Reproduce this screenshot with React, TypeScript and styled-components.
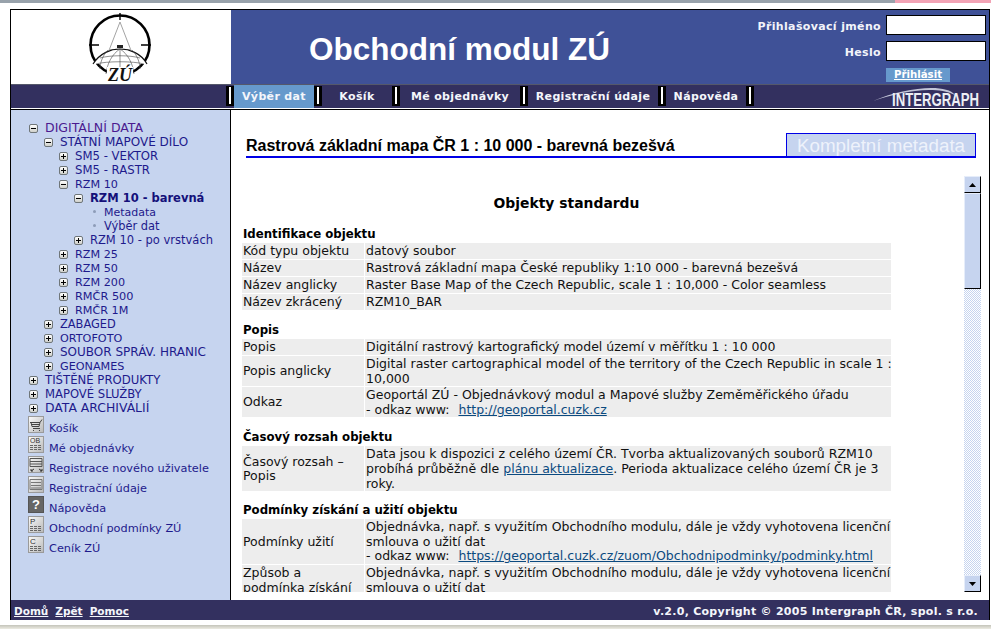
import React from "react";
import styled, { createGlobalStyle } from "styled-components";

const Global = createGlobalStyle`
  html, body { margin: 0; padding: 0; background: #fff; overflow: hidden; }
  #root { width: 991px; height: 629px; overflow: hidden; }
  * { box-sizing: border-box; }
`;

const checker =
  "data:image/svg+xml,%3Csvg xmlns='http://www.w3.org/2000/svg' width='2' height='2' shape-rendering='crispEdges'%3E%3Crect width='2' height='2' fill='%23fff'/%3E%3Crect width='1' height='1' fill='%23c6d4ef'/%3E%3Crect x='1' y='1' width='1' height='1' fill='%23c6d4ef'/%3E%3C/svg%3E";

const Page = styled.div`
  width: 991px;
  height: 629px;
  display: flex;
  flex-direction: column;
  font-family: "DejaVu Sans", Verdana, sans-serif;
  background: #fff;
`;
const TopChrome = styled.div`
  height: 3px;
  flex: none;
  display: flex;
  background: #98a2ab;
  &::after { content: ""; margin-left: auto; width: 96px; background: #f2a3b5; }
`;
const Frame = styled.div`
  flex: none;
  margin: 6px 1px 0 10px;
  width: 980px;
  height: 611px;
  border: 1px solid #000;
  border-bottom: 0;
  display: flex;
  flex-direction: column;
`;
const BottomChrome = styled.div`
  flex: none;
  margin-top: 5px;
  height: 4px;
  background: linear-gradient(#c4c4ba, #ecebe2);
`;
const Header = styled.header`
  flex: none;
  height: 75px;
  display: flex;
  border-bottom: 1px solid #55586a;
`;
const LogoCell = styled.div`
  width: 220px;
  flex: none;
  background: #fff;
  display: flex;
  justify-content: center;
  padding: 2px 2px 0 0;
`;
const Banner = styled.div`
  flex: 1;
  background: #3f5197;
  display: flex;
  justify-content: space-between;
`;
const Title = styled.h1`
  margin: 21px 0 0 78px;
  font: bold 31.5px/36px "Liberation Sans", Arial, sans-serif;
  color: #fff;
  white-space: nowrap;
`;
const Login = styled.form`
  width: 240px;
  padding: 5px 3px 0 0;
  display: flex;
  flex-direction: column;
  align-items: flex-end;
`;
const LoginRow = styled.label`
  display: flex;
  align-items: center;
  gap: 5px;
  height: 20px;
  margin-bottom: 6px;
  font-size: 11px;
  font-weight: bold;
  color: #f2f4fa;
  letter-spacing: 0.35px;
`;
const LoginText = styled.span`
  margin-top: 2px;
`;
const LoginInput = styled.input`
  width: 100px;
  height: 20px;
  border: 1px solid #000;
  background: #fff;
  padding: 0;
`;
const LoginButton = styled.a`
  align-self: flex-start;
  margin: 1px 0 0 137px;
  width: 64px;
  height: 14px;
  background: #6699cc;
  color: #fff;
  font-size: 10.2px;
  font-weight: bold;
  line-height: 13px;
  text-align: center;
  text-decoration: underline;
`;
const Nav = styled.nav`
  flex: none;
  height: 23px;
  background: #33305f;
  display: flex;
  padding-left: 215px;
  position: relative;
`;
const Sep = styled.span`
  flex: none;
  width: 8px;
  height: 20px;
  margin-top: 1px;
  background: #000;
  display: flex;
  justify-content: center;
  &::before { content: ""; width: 2px; height: 17px; margin-top: 1px; background: #fff; }
`;
const Tab = styled.a<{ $w: number; $active?: boolean }>`
  flex: none;
  width: ${(p) => p.$w}px;
  background: ${(p) => (p.$active ? "#6699cc" : "transparent")};
  color: #f4f6fb;
  font-size: 11px;
  font-weight: bold;
  line-height: 24px;
  letter-spacing: 0.35px;
  text-align: center;
  white-space: nowrap;
`;
const Intergraph = styled.svg`
  position: absolute;
  right: 8px;
  top: 0;
`;
const Rule = styled.div`
  flex: none;
  height: 2px;
  background: linear-gradient(#fff 50%, #000 50%);
`;
const Body = styled.div`
  flex: none;
  height: 490px;
  display: flex;
`;
const Side = styled.aside`
  width: 220px;
  flex: none;
  background: #c6d4ef;
  border-right: 1px solid #000;
  padding-top: 12px;
`;
const TreeRow = styled.div<{ $level: number }>`
  height: 14px;
  display: flex;
  align-items: center;
  padding-left: ${(p) => 18 + p.$level * 15}px;
  line-height: 14px;
  white-space: nowrap;
`;
const Toggle = styled.span<{ $open: boolean }>`
  flex: none;
  width: 9px;
  height: 9px;
  margin: -1px 7px 0 0;
  border: 1px solid #6f7679;
  border-radius: 2px;
  background: linear-gradient(#fff, #cfd0ca);
  position: relative;
  &::before {
    content: "";
    position: absolute;
    left: 1px;
    top: 3px;
    width: 5px;
    height: 1px;
    background: #000;
  }
  &::after {
    content: "";
    display: ${(p) => (p.$open ? "none" : "block")};
    position: absolute;
    left: 3px;
    top: 1px;
    width: 1px;
    height: 5px;
    background: #000;
  }
`;
const Bullet = styled.span`
  flex: none;
  width: 3px;
  height: 3px;
  margin: -4px 8px 0 4px;
  border-radius: 50%;
  background: #8d9cb8;
`;
const TreeLabel = styled.a<{ $size: number; $bold?: boolean; $visited?: boolean }>`
  font-size: ${(p) => p.$size}px;
  margin-top: ${(p) => (p.$size >= 11.4 ? -2 : 0)}px;
  color: ${(p) => (p.$visited ? "#4b1a8f" : p.$bold ? "#14107a" : "#1e1a8c")};
  font-weight: ${(p) => (p.$bold ? "bold" : "normal")};
`;
const MenuList = styled.div`
  padding-left: 17px;
`;
const MenuRow = styled.div`
  height: 20px;
  display: flex;
  align-items: flex-start;
  font-size: 11.3px;
  color: #1e1a8c;
  white-space: nowrap;
`;
const MenuIcon = styled.svg`
  flex: none;
  margin-right: 4px;
`;
const MenuText = styled.a`
  line-height: 14px;
  margin-top: 6px;
`;
const Main = styled.main`
  flex: 1;
  min-width: 0;
  display: flex;
  flex-direction: column;
`;
const TitleBar = styled.div`
  margin: 23px 13px 0 15px;
  height: 25px;
  flex: none;
  display: flex;
  justify-content: space-between;
  border-bottom: 2px solid #0000e6;
`;
const PageTitle = styled.h2`
  margin: 0;
  padding-top: 4px;
  font: bold 16px/18px "Liberation Sans", Arial, sans-serif;
  color: #000;
  white-space: nowrap;
`;
const MetaButton = styled.a`
  width: 190px;
  flex: none;
  background: #c6d4ef;
  border: 1px solid #0000e6;
  border-bottom: 0;
  color: #eef2fb;
  font: 18.8px/23px "Liberation Sans", Arial, sans-serif;
  text-align: center;
  white-space: nowrap;
`;
const ScrollRow = styled.div`
  margin-top: 18px;
  height: 416px;
  flex: none;
  display: flex;
  padding-right: 8px;
`;
const Content = styled.div`
  flex: 1;
  min-width: 0;
  overflow: hidden;
  padding: 19px 0 0 11px;
`;
const ContentInner = styled.div`
  width: 649px;
`;
const Heading = styled.h3`
  margin: 0 0 15px;
  text-align: center;
  font-size: 13.9px;
  line-height: 17px;
  font-weight: bold;
  color: #000;
`;
const SectionTitle = styled.h4`
  margin: 0;
  padding-left: 1px;
  font-size: 11.75px;
  line-height: 15px;
  font-weight: bold;
  color: #000;
`;
const Table = styled.table<{ $after: number }>`
  border-collapse: separate;
  border-spacing: 1px;
  margin: 0 -1px ${(p) => p.$after}px;
  width: 651px;
  table-layout: fixed;
  font-size: 12.5px;
  line-height: 14.6px;
  color: #111;
`;
const Cell = styled.td`
  height: 16px;
  background: #ededed;
  padding: 1px 0 0 1px;
  vertical-align: middle;
  overflow-wrap: break-word;
`;
const LabelCol = styled.col`
  width: 122px;
`;
const Link = styled.a`
  color: #0b4a80;
  text-decoration: underline;
`;
const UrlLink = styled(Link)`
  margin-left: 5px;
`;
const FullLine = styled.span`
  white-space: nowrap;
`;
const Scrollbar = styled.div`
  width: 17px;
  flex: none;
  height: 416px;
  display: flex;
  flex-direction: column;
  background: url("${checker}") 0 0 / 2px 2px;
`;
const ScrollBtn = styled.div`
  flex: none;
  height: 17px;
  background: #c6d4ef;
  border: 1px solid;
  border-color: #e6edfa #000 #000 #e6edfa;
  display: flex;
  align-items: center;
  justify-content: center;
`;
const ScrollThumb = styled.div`
  flex: none;
  height: 96px;
  background: #c6d4ef;
  border: 1px solid;
  border-color: #e6edfa #000 #000 #e6edfa;
`;
const ScrollSpace = styled.div`
  flex: 1;
`;
const Footer = styled.footer`
  flex: none;
  height: 20px;
  background: #33305f;
  color: #f4f6fb;
  font-size: 10.5px;
  font-weight: bold;
  line-height: 23px;
  display: flex;
  justify-content: space-between;
  padding: 0 11px 0 3px;
`;
const FootLinks = styled.div`
  display: flex;
  gap: 7px;
`;
const FootLink = styled.a`
  text-decoration: underline;
`;
const FootNote = styled.div`
  font-size: 11px;
  letter-spacing: 0.27px;
`;

const Logo = () => (
  <svg width="68" height="72" viewBox="0 0 68 72" aria-label="ZÚ">
    <circle cx="34" cy="33" r="29.5" fill="none" stroke="#000" strokeWidth="2.6" />
    <path d="M34 1v7M3 33h10M55 33h10" stroke="#000" strokeWidth="1.4" />
    <path d="M34 10 22 41M34 10 46 41" stroke="#999" strokeWidth="0.9" fill="none" />
    <path d="M31 33h6v3h-6z" fill="#222" />
    <path d="M24 38h20" stroke="#555" strokeWidth="1" />
    <path d="M7 52c7-11 18-15 27-15s21 4 27 15" fill="#fff" stroke="#111" strokeWidth="1.2" />
    <path d="M10 52c10-3 38-3 48 0M14 46c10-3 30-3 40 0M34 37v26M34 37c-8 5-13 15-14 25M34 37c8 5 13 15 14 25M22 38c-6 6-8 14-8 19M46 38c6 6 8 14 8 19" stroke="#444" strokeWidth="0.6" fill="none" />
    <rect x="21" y="55" width="26" height="15" fill="#fff" />
    <text x="34" y="69" textAnchor="middle" fontFamily="Liberation Serif, serif" fontWeight="bold" fontStyle="italic" fontSize="18" fill="#111">ZÚ</text>
  </svg>
);

type IconKind = "cart" | "ob" | "reg" | "data" | "help" | "p" | "c";

const Icon = ({ kind }: { kind: IconKind }) => {
  const dark = kind === "help";
  return (
    <MenuIcon width="17" height="18" viewBox="0 0 17 18">
      <defs>
        <linearGradient id={`g-${kind}`} x1="0" y1="0" x2="1" y2="1">
          <stop offset="0" stopColor="#fafafa" />
          <stop offset="1" stopColor="#b9b9b9" />
        </linearGradient>
      </defs>
      <rect x="0.5" y="0.5" width="15" height="16" fill={dark ? "#666" : `url(#g-${kind})`} stroke={dark ? "#555" : "#9a9a9a"} />
      {kind === "cart" && (
        <g fill="none" stroke="#444" strokeWidth="1">
          <path d="M2 6.500h10l2-3M3 6.500l1 4h7l1-4M4 8.500h7M5 12.500h7" />
          <path d="M5 14.500h1M11 14.500h1" />
        </g>
      )}
      {kind === "ob" && (
        <g>
          <text x="2" y="7" fontFamily="Liberation Sans, sans-serif" fontSize="7" fill="#333">OB</text>
          <path d="M2 9.500h12M2 11.500h12M2 13.500h12" stroke="#666" strokeDasharray="3 1" />
        </g>
      )}
      {kind === "reg" && (
        <g stroke="#555" fill="none">
          <path d="M2 2.500h12v8H2zM2 5.500h12M2 8h12" />
          <path d="M3 15l3-2M3 13v2h2M14 15l-3-2M14 13v2h-2" stroke="#333" />
        </g>
      )}
      {kind === "data" && (
        <path d="M2 3.500h12v10H2zM3 6.500h10M3 9.500h10M3 12h10" stroke="#777" fill="none" />
      )}
      {kind === "help" && (
        <text x="8" y="13" textAnchor="middle" fontFamily="Liberation Sans, sans-serif" fontWeight="bold" fontSize="13" fill="#fff">?</text>
      )}
      {(kind === "p" || kind === "c") && (
        <g>
          <text x="2" y="7.500" fontFamily="Liberation Sans, sans-serif" fontSize="8" fill="#333">{kind.toUpperCase()}</text>
          <path d="M2 10.500h12M2 12.500h12M2 14.500h12" stroke="#666" strokeDasharray="3 1" />
        </g>
      )}
    </MenuIcon>
  );
};

type Node = { t: string; l: number; s: "o" | "c" | "b"; z: number; bold?: boolean; visited?: boolean };
const tree: Node[] = [
  { t: "DIGITÁLNÍ DATA", l: 0, s: "o", z: 12.5, visited: true },
  { t: "STÁTNÍ MAPOVÉ DÍLO", l: 1, s: "o", z: 12 },
  { t: "SM5 - VEKTOR", l: 2, s: "c", z: 11.7 },
  { t: "SM5 - RASTR", l: 2, s: "c", z: 11.7 },
  { t: "RZM 10", l: 2, s: "o", z: 11.2 },
  { t: "RZM 10 - barevná", l: 3, s: "o", z: 11.5, bold: true },
  { t: "Metadata", l: 4, s: "b", z: 11 },
  { t: "Výběr dat", l: 4, s: "b", z: 11.4 },
  { t: "RZM 10 - po vrstvách", l: 3, s: "c", z: 11.5 },
  { t: "RZM 25", l: 2, s: "c", z: 11.2 },
  { t: "RZM 50", l: 2, s: "c", z: 11.2 },
  { t: "RZM 200", l: 2, s: "c", z: 11.2 },
  { t: "RMČR 500", l: 2, s: "c", z: 11.3 },
  { t: "RMČR 1M", l: 2, s: "c", z: 11.2 },
  { t: "ZABAGED", l: 1, s: "c", z: 11.4 },
  { t: "ORTOFOTO", l: 1, s: "c", z: 11.2 },
  { t: "SOUBOR SPRÁV. HRANIC", l: 1, s: "c", z: 12 },
  { t: "GEONAMES", l: 1, s: "c", z: 11.2 },
  { t: "TIŠTĚNÉ PRODUKTY", l: 0, s: "c", z: 11.7 },
  { t: "MAPOVÉ SLUŽBY", l: 0, s: "c", z: 11.6 },
  { t: "DATA ARCHIVÁLIÍ", l: 0, s: "c", z: 12.4 },
];

const menu: { t: string; k: IconKind }[] = [
  { t: "Košík", k: "cart" },
  { t: "Mé objednávky", k: "ob" },
  { t: "Registrace nového uživatele", k: "reg" },
  { t: "Registrační údaje", k: "data" },
  { t: "Nápověda", k: "help" },
  { t: "Obchodní podmínky ZÚ", k: "p" },
  { t: "Ceník ZÚ", k: "c" },
];

type Row = [string, React.ReactNode];
const sections: { title: string; after: number; rows: Row[] }[] = [
  {
    title: "Identifikace objektu",
    after: 12,
    rows: [
      ["Kód typu objektu", "datový soubor"],
      ["Název", "Rastrová základní mapa České republiky 1:10 000 - barevná bezešvá"],
      ["Název anglicky", "Raster Base Map of the Czech Republic, scale 1 : 10,000 - Color seamless"],
      ["Název zkrácený", "RZM10_BAR"],
    ],
  },
  {
    title: "Popis",
    after: 12,
    rows: [
      ["Popis", "Digitální rastrový kartografický model území v měřítku 1 : 10 000"],
      ["Popis anglicky", <><FullLine>Digital raster cartographical model of the territory of the Czech Republic in scale 1 :</FullLine><br />10,000</>],
      ["Odkaz", <>Geoportál ZÚ - Objednávkový modul a Mapové služby Zeměměřického úřadu<br />- odkaz www: <UrlLink>http://geoportal.cuzk.cz</UrlLink></>],
    ],
  },
  {
    title: "Časový rozsah objektu",
    after: 11,
    rows: [
      ["Časový rozsah – Popis", <>Data jsou k dispozici z celého území ČR. Tvorba aktualizovaných souborů RZM10 probíhá průběžně dle <Link>plánu aktualizace</Link>. Perioda aktualizace celého území ČR je 3 roky.</>],
    ],
  },
  {
    title: "Podmínky získání a užití objektu",
    after: 10,
    rows: [
      ["Podmínky užití", <>Objednávka, např. s využitím Obchodního modulu, dále je vždy vyhotovena licenční smlouva o užití dat<br />- odkaz www: <UrlLink>https://geoportal.cuzk.cz/zuom/Obchodnipodminky/podminky.html</UrlLink></>],
      ["Způsob a podmínka získání", "Objednávka, např. s využitím Obchodního modulu, dále je vždy vyhotovena licenční smlouva o užití dat"],
    ],
  },
];

export default function App() {
  return (
    <Page>
      <Global />
      <TopChrome />
      <Frame>
        <Header>
          <LogoCell><Logo /></LogoCell>
          <Banner>
            <Title>Obchodní modul ZÚ</Title>
            <Login>
              <LoginRow><LoginText>Přihlašovací jméno</LoginText><LoginInput /></LoginRow>
              <LoginRow><LoginText>Heslo</LoginText><LoginInput type="password" /></LoginRow>
              <LoginButton>Přihlásit</LoginButton>
            </Login>
          </Banner>
        </Header>
        <Nav>
          <Sep />
          <Tab $w={80} $active>Výběr dat</Tab>
          <Sep />
          <Tab $w={70}>Košík</Tab>
          <Sep />
          <Tab $w={120}>Mé objednávky</Tab>
          <Sep />
          <Tab $w={130}>Registrační údaje</Tab>
          <Sep />
          <Tab $w={80}>Nápověda</Tab>
          <Sep />
          <Intergraph width="112" height="23" viewBox="0 0 112 23" aria-label="Intergraph">
            <path d="M4 16C22 8 46 3 62 3c12 0 20 2 24 7C78 6 70 5 60 5 42 5 22 10 4 16z" fill="#c3c6d8" />
            <text x="23" y="21" fontFamily="Liberation Sans, sans-serif" fontWeight="bold" fontSize="19" textLength="87" lengthAdjust="spacingAndGlyphs" fill="#eceef4">INTERGRAPH</text>
          </Intergraph>
        </Nav>
        <Rule />
        <Body>
          <Side>
            {tree.map((n) => (
              <TreeRow key={n.t + n.l} $level={n.l}>
                {n.s === "b" ? <Bullet /> : <Toggle $open={n.s === "o"} />}
                <TreeLabel $size={n.z} $bold={n.bold} $visited={n.visited}>{n.t}</TreeLabel>
              </TreeRow>
            ))}
            <MenuList>
              {menu.map((m) => (
                <MenuRow key={m.t}>
                  <Icon kind={m.k} />
                  <MenuText>{m.t}</MenuText>
                </MenuRow>
              ))}
            </MenuList>
          </Side>
          <Main>
            <TitleBar>
              <PageTitle>Rastrová základní mapa ČR 1 : 10 000 - barevná bezešvá</PageTitle>
              <MetaButton>Kompletní metadata</MetaButton>
            </TitleBar>
            <ScrollRow>
              <Content>
                <ContentInner>
                  <Heading>Objekty standardu</Heading>
                  {sections.map((s) => (
                    <React.Fragment key={s.title}>
                      <SectionTitle>{s.title}</SectionTitle>
                      <Table $after={s.after}>
                        <colgroup><LabelCol /><col /></colgroup>
                        <tbody>
                          {s.rows.map(([a, b]) => (
                            <tr key={a}>
                              <Cell>{a}</Cell>
                              <Cell>{b}</Cell>
                            </tr>
                          ))}
                        </tbody>
                      </Table>
                    </React.Fragment>
                  ))}
                </ContentInner>
              </Content>
              <Scrollbar>
                <ScrollBtn>
                  <svg width="7" height="4" viewBox="0 0 7 4"><path d="M3.500 0 7 4H0z" fill="#000" /></svg>
                </ScrollBtn>
                <ScrollThumb />
                <ScrollSpace />
                <ScrollBtn>
                  <svg width="7" height="4" viewBox="0 0 7 4"><path d="M0 0h7L3.500 4z" fill="#000" /></svg>
                </ScrollBtn>
              </Scrollbar>
            </ScrollRow>
          </Main>
        </Body>
        <Footer>
          <FootLinks>
            <FootLink>Domů</FootLink>
            <FootLink>Zpět</FootLink>
            <FootLink>Pomoc</FootLink>
          </FootLinks>
          <FootNote>v.2.0, Copyright © 2005 Intergraph ČR, spol. s r.o.</FootNote>
        </Footer>
      </Frame>
      <BottomChrome />
    </Page>
  );
}
